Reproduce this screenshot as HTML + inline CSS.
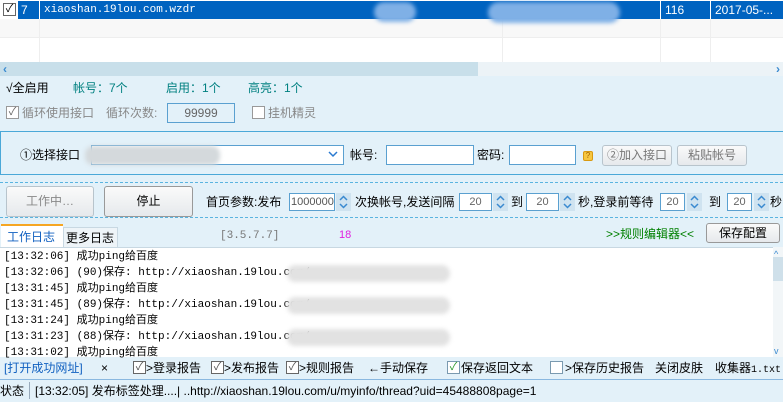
<!DOCTYPE html>
<html><head><meta charset="utf-8"><style>
*{margin:0;padding:0;box-sizing:border-box}
body{width:783px;height:402px;overflow:hidden;background:#e3f1f9;font-family:"Liberation Sans","Noto Sans CJK SC",sans-serif;font-size:12px;color:#000;position:relative}
.a{position:absolute;white-space:nowrap;line-height:14px}
.m{font-family:"Liberation Mono","Noto Sans CJK SC",monospace}
.inp{position:absolute;background:#fff;border:1px solid #5aa0d0}
.btn{position:absolute;border:1px solid #b8c4cc;border-radius:3px;background:linear-gradient(#fafafa,#e6e9ec);text-align:center;color:#000}
.cb{position:absolute;width:13px;height:13px;border:1px solid #666;background:#fff;font-size:11px;line-height:11px;text-align:center}
.sp{position:absolute;width:15px;height:18px;background:#cfe3f0}
.blur{position:absolute;background:#d4d9dc;border-radius:8px;filter:blur(2px)}
.dash{position:absolute;left:0;width:783px;border-top:1px dashed #5ab4e0}
</style></head><body>
<svg width="0" height="0" style="position:absolute"><defs><g id="ud"><path d="M4 7 L7.5 3.5 L11 7 M4 11 L7.5 14.5 L11 11" fill="none" stroke="#3a8ad0" stroke-width="1.5"/></g></defs></svg>
<div style="position:absolute;left:0;top:0;width:783px;height:62px;background:#fff"></div>
<div style="position:absolute;left:0;top:19px;width:783px;height:19px;background:#f8f8f8;border-bottom:1px solid #eee"></div>
<div style="position:absolute;left:39px;top:19px;width:1px;height:43px;background:#eee"></div>
<div style="position:absolute;left:502px;top:19px;width:1px;height:43px;background:#eee"></div>
<div style="position:absolute;left:660px;top:19px;width:1px;height:43px;background:#eee"></div>
<div style="position:absolute;left:710px;top:19px;width:1px;height:43px;background:#eee"></div>
<div style="position:absolute;left:18px;top:1px;width:765px;height:18px;background:#0063c0"></div>
<div class="cb" style="left:3px;top:3px;color:#000">✓</div>
<div class="a" style="left:21px;top:3px;color:#fff">7</div>
<div style="position:absolute;left:39px;top:1px;width:1px;height:18px;background:#fff"></div>
<div class="a m" style="left:44px;top:3px;color:#fff;font-size:11px">xiaoshan.19lou.com.wzdr</div>
<div style="position:absolute;left:374px;top:2px;width:42px;height:20px;background:#7fb0e6;border-radius:10px;filter:blur(2px)"></div>
<div style="position:absolute;left:488px;top:2px;width:132px;height:21px;background:#7fb0e6;border-radius:12px;filter:blur(2px)"></div>
<div style="position:absolute;left:660px;top:1px;width:1px;height:18px;background:#fff"></div>
<div style="position:absolute;left:710px;top:1px;width:1px;height:18px;background:#fff"></div>
<div class="a" style="left:665px;top:3px;color:#fff">116</div>
<div class="a" style="left:715px;top:3px;color:#fff">2017-05-...</div>
<div style="position:absolute;left:0;top:62px;width:783px;height:14px;background:#ecf3f7"></div>
<div style="position:absolute;left:0;top:62px;width:478px;height:14px;background:#c8dfea"></div>
<div class="a" style="left:3px;top:62px;color:#3a8ad0;font-weight:bold">‹</div>
<div class="a" style="left:776px;top:62px;color:#3a8ad0;font-weight:bold">›</div>
<div class="a" style="left:6px;top:81px">√全启用</div>
<div class="a" style="left:73px;top:81px;color:#008080">帐号：7个</div>
<div class="a" style="left:166px;top:81px;color:#008080">启用：1个</div>
<div class="a" style="left:248px;top:81px;color:#008080">高亮：1个</div>
<div class="cb" style="left:6px;top:106px;border-color:#999;color:#666">✓</div>
<div class="a" style="left:22px;top:106px;color:#888">循环使用接口</div>
<div class="a" style="left:106px;top:106px;color:#888">循环次数:</div>
<div class="inp" style="left:167px;top:103px;width:68px;height:20px;background:#e3f1f9;text-align:center;color:#666;line-height:18px">99999</div>
<div class="cb" style="left:252px;top:106px;border-color:#999"></div>
<div class="a" style="left:268px;top:106px;color:#888">挂机精灵</div>
<div style="position:absolute;left:0;top:131px;width:790px;height:44px;border:1px solid #4aa8d8;background:#e3f1f9"></div>
<div class="a" style="left:20px;top:148px">①选择接口</div>
<div class="inp" style="left:91px;top:145px;width:253px;height:20px"></div>
<div class="blur" style="left:85px;top:146px;width:135px;height:19px"></div>
<svg style="position:absolute;left:328px;top:150px" width="10" height="8"><path d="M1 2 L5 6 L9 2" fill="none" stroke="#2a7ad0" stroke-width="1.5"/></svg>
<div class="a" style="left:350px;top:148px">帐号:</div>
<div class="inp" style="left:386px;top:145px;width:88px;height:20px"></div>
<div class="a" style="left:477px;top:148px">密码:</div>
<div class="inp" style="left:509px;top:145px;width:67px;height:20px"></div>
<div style="position:absolute;left:583px;top:151px;width:10px;height:10px;background:#f6c640;border:1px solid #d99a10;border-radius:2px;font-size:8px;line-height:8px;text-align:center;color:#a06000">?</div>
<div class="btn" style="left:602px;top:145px;width:70px;height:21px;line-height:19px;color:#777">②加入接口</div>
<div class="btn" style="left:677px;top:145px;width:70px;height:21px;line-height:19px;color:#777">粘贴帐号</div>
<div class="dash" style="top:182px"></div>
<div class="btn" style="left:6px;top:186px;width:88px;height:31px;line-height:29px;color:#888">工作中…</div>
<div class="btn" style="left:104px;top:186px;width:89px;height:31px;line-height:29px;border-color:#999">停止</div>
<div class="a" style="left:206px;top:195px">首页参数:发布</div>
<div class="inp" style="left:289px;top:193px;width:46px;height:18px;font-size:11px;color:#555;line-height:16px;padding-left:1px">1000000</div>
<svg class="sp" style="left:336px;top:193px"><use href="#ud"/></svg>
<div class="a" style="left:355px;top:195px">次换帐号,发送间隔</div>
<div class="inp" style="left:459px;top:193px;width:33px;height:18px;text-align:center;color:#666;font-size:11px;line-height:16px">20</div>
<svg class="sp" style="left:493px;top:193px"><use href="#ud"/></svg>
<div class="a" style="left:511px;top:195px">到</div>
<div class="inp" style="left:526px;top:193px;width:33px;height:18px;text-align:center;color:#666;font-size:11px;line-height:16px">20</div>
<svg class="sp" style="left:560px;top:193px"><use href="#ud"/></svg>
<div class="a" style="left:578px;top:195px">秒,登录前等待</div>
<div class="inp" style="left:660px;top:193px;width:25px;height:18px;text-align:center;color:#666;font-size:11px;line-height:16px">20</div>
<svg class="sp" style="left:687px;top:193px"><use href="#ud"/></svg>
<div class="a" style="left:709px;top:195px">到</div>
<div class="inp" style="left:727px;top:193px;width:25px;height:18px;text-align:center;color:#666;font-size:11px;line-height:16px">20</div>
<svg class="sp" style="left:754px;top:193px"><use href="#ud"/></svg>
<div class="a" style="left:770px;top:195px">秒</div>
<div class="dash" style="top:217px"></div>
<div style="position:absolute;left:1px;top:224px;width:62px;height:24px;background:#fff;border-top:2px solid #f5a623"></div>
<div class="a" style="left:7px;top:230px;color:#1060c0">工作日志</div>
<div style="position:absolute;left:63px;top:227px;width:55px;height:21px;background:#eef4f8;border:1px solid #c8d8e2"></div>
<div class="a" style="left:66px;top:231px">更多日志</div>
<div class="a m" style="left:220px;top:229px;color:#777;font-size:11px">[3.5.7.7]</div>
<div class="a" style="left:339px;top:228px;color:#e020e0;font-size:11px">18</div>
<div class="a" style="left:606px;top:227px;color:#008000">>>规则编辑器<<</div>
<div class="btn" style="left:706px;top:223px;width:74px;height:20px;line-height:18px;border-color:#999">保存配置</div>
<div style="position:absolute;left:0;top:247px;width:773px;height:110px;background:#fff;border-top:1px solid #c8d8e2"></div>
<div style="position:absolute;left:773px;top:247px;width:10px;height:110px;background:#f2f6f8"></div>
<div style="position:absolute;left:773px;top:257px;width:10px;height:24px;background:#cfe0ea"></div>
<div class="a" style="left:774px;top:247px;color:#3a8ad0;font-size:9px">^</div>
<div class="a" style="left:774px;top:344px;color:#3a8ad0;font-size:9px">v</div>
<div class="a m" style="left:4px;top:250px;font-size:11px">[13:32:06] 成功ping给百度</div>
<div class="a m" style="left:4px;top:266px;font-size:11px">[13:32:06] (90)保存: http://xiaoshan.19lou.com/</div>
<div class="a m" style="left:4px;top:282px;font-size:11px">[13:31:45] 成功ping给百度</div>
<div class="a m" style="left:4px;top:298px;font-size:11px">[13:31:45] (89)保存: http://xiaoshan.19lou.com/</div>
<div class="a m" style="left:4px;top:314px;font-size:11px">[13:31:24] 成功ping给百度</div>
<div class="a m" style="left:4px;top:330px;font-size:11px">[13:31:23] (88)保存: http://xiaoshan.19lou.com/</div>
<div class="a m" style="left:4px;top:346px;font-size:11px">[13:31:02] 成功ping给百度</div>
<div class="blur" style="left:287px;top:265px;width:163px;height:17px;background:#e2e2e2"></div>
<div class="blur" style="left:287px;top:297px;width:163px;height:17px;background:#e2e2e2"></div>
<div class="blur" style="left:287px;top:329px;width:163px;height:17px;background:#e2e2e2"></div>
<div class="a" style="left:4px;top:361px;color:#1060c0">[打开成功网址]</div>
<div class="a" style="left:101px;top:361px">×</div>
<div class="cb" style="left:133px;top:361px;color:#555">✓</div><div class="a" style="left:146px;top:361px">>登录报告</div>
<div class="cb" style="left:211px;top:361px;color:#555">✓</div><div class="a" style="left:224px;top:361px">>发布报告</div>
<div class="cb" style="left:286px;top:361px;color:#555">✓</div><div class="a" style="left:299px;top:361px">>规则报告</div>
<div class="a" style="left:368px;top:361px">←手动保存</div>
<div class="cb" style="left:447px;top:361px;color:#2a9a2a;border-color:#7a9ab0">✓</div><div class="a" style="left:461px;top:361px">保存返回文本</div>
<div class="cb" style="left:550px;top:361px;border-color:#7a9ab0"></div><div class="a" style="left:565px;top:361px">>保存历史报告</div>
<div class="a" style="left:655px;top:361px">关闭皮肤</div>
<div class="a" style="left:715px;top:361px">收集器<span class="m" style="font-size:10px">1.txt</span></div>
<div style="position:absolute;left:0;top:379px;width:783px;height:23px;border-top:1px solid #8ab8e0;background:#e3f1f9"></div>
<div class="a" style="left:0;top:384px">状态</div>
<div style="position:absolute;left:29px;top:382px;width:1px;height:17px;background:#9ab"></div>
<div class="a" style="left:35px;top:384px">[13:32:05] 发布标签处理....| ..http://xiaoshan.19lou.com/u/myinfo/thread?uid=45488808page=1</div>
</body></html>
